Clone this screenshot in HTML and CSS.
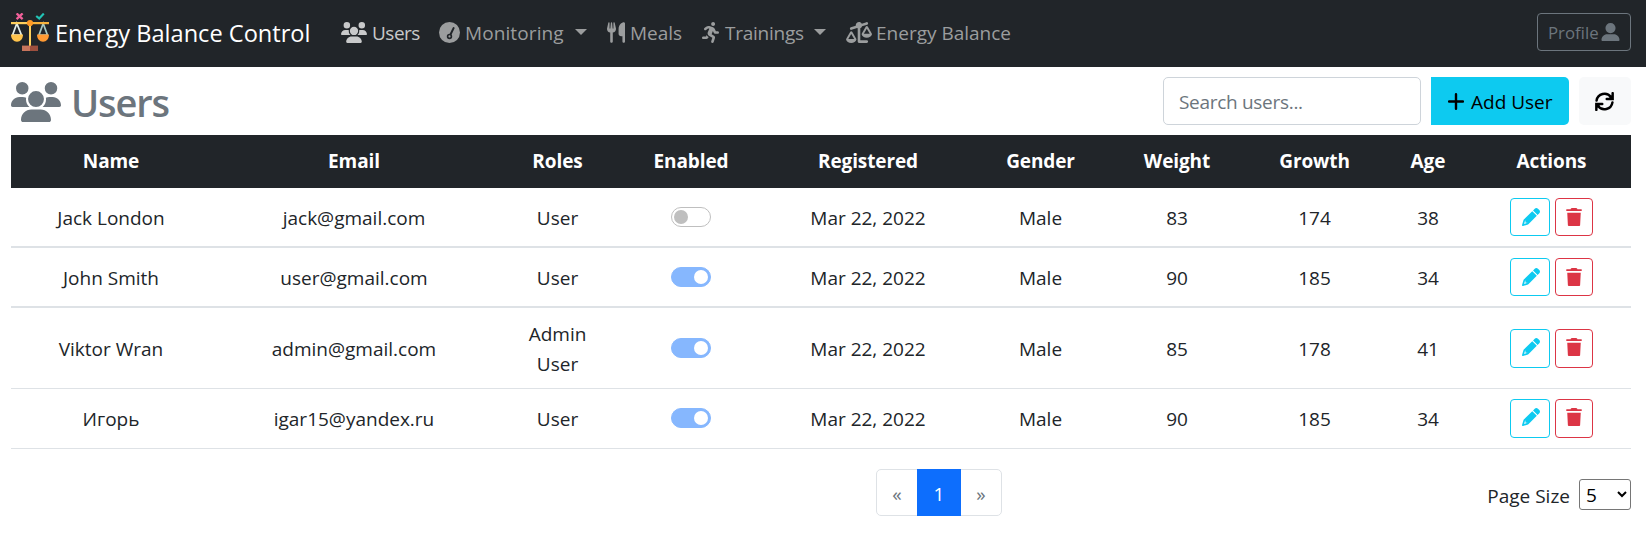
FILE: index.html
```html
<!DOCTYPE html>
<html lang="en">
<head>
<meta charset="utf-8">
<title>Energy Balance Control</title>
<link rel="stylesheet" href="styles.css">
</head>
<body>
<svg class="defs" width="0" height="0" aria-hidden="true">
  <symbol id="users" viewBox="0 0 640 512"><path d="M144 160A80 80 0 1 0 144 0a80 80 0 1 0 0 160zm368 0A80 80 0 1 0 512 0a80 80 0 1 0 0 160zM0 298.7C0 310.4 9.6 320 21.3 320H234.7c.2 0 .4 0 .7 0c-26.6-23.5-43.3-57.8-43.3-96c0-7.6 .7-15 1.9-22.3c-13.6-6.3-28.7-9.7-44.6-9.7H106.7C47.8 192 0 239.8 0 298.7zM320 320A102 102 0 1 0 320 116a102 102 0 1 0 0 204zM405.3 320H618.7c11.8 0 21.3-9.6 21.3-21.3C640 239.8 592.2 192 533.3 192H490.7c-15.9 0-31 3.5-44.6 9.7c1.3 7.2 1.9 14.7 1.9 22.3c0 38.2-16.8 72.5-43.3 96zM261.3 352C187.7 352 128 411.7 128 485.3c0 14.7 11.9 26.7 26.7 26.7H485.3c14.7 0 26.7-11.9 26.7-26.7C512 411.7 452.3 352 378.7 352H261.3z"/></symbol>
  <symbol id="gauge" viewBox="0 0 512 512"><circle cx="256" cy="256" r="256"/><path d="M256 352L356 150" class="gauge-needle"/><circle cx="256" cy="352" r="46" class="gauge-hub"/></symbol>
  <symbol id="utensils" viewBox="0 0 448 512"><path d="M416 0C400 0 288 32 288 176V288c0 35.3 28.7 64 64 64h32V480c0 17.7 14.3 32 32 32s32-14.3 32-32V352 240 32c0-17.7-14.3-32-32-32zM64 16C64 7.8 57.9 1 49.7 .1S34.2 4.6 32.4 12.5L2.1 148.8C.7 155.1 0 161.5 0 167.9c0 45.9 35.1 83.6 80 87.7V480c0 17.7 14.3 32 32 32s32-14.3 32-32V255.6c44.9-4.1 80-41.8 80-87.7c0-6.4-.7-12.8-2.1-19.1L191.6 12.5c-1.8-8-9.3-13.3-17.4-12.4S160 7.8 160 16V150.2c0 5.4-4.4 9.8-9.8 9.8c-5.1 0-9.3-3.9-9.8-9L127.9 14.6C127.2 6.3 120.3 0 112 0s-15.2 6.3-15.9 14.6L83.7 151c-.5 5.1-4.7 9-9.8 9c-5.4 0-9.8-4.4-9.8-9.8V16z"/></symbol>
  <symbol id="running" viewBox="0 0 416 512"><path d="M272 96c26.51 0 48-21.49 48-48S298.51 0 272 0s-48 21.49-48 48 21.49 48 48 48zM113.69 317.47l-14.8 34.52H32c-17.67 0-32 14.33-32 32s14.33 32 32 32h77.45c19.25 0 36.58-11.44 44.11-29.09l8.79-20.52-10.67-6.3c-17.32-10.23-30.06-25.37-37.99-42.61zM384 223.99h-44.03l-26.06-53.25c-12.5-25.55-35.45-44.23-61.78-50.94l-71.08-21.14c-28.3-6.8-57.77-.55-80.84 17.14l-39.67 30.41c-14.03 10.75-16.69 30.83-5.94 44.86s30.84 16.69 44.86 5.94l39.66-30.41c7.67-5.89 17.44-8 25.27-6.14l14.7 4.37-37.46 87.39c-12.62 29.48-1.31 64.01 26.3 80.31l84.98 50.17-27.47 87.73c-5.28 16.86 4.11 34.82 20.97 40.09 3.19 1 6.41 1.48 9.58 1.48 13.61 0 26.23-8.77 30.52-22.45l31.64-101.06c5.91-20.77-2.89-43.08-21.64-54.39l-61.24-36.14 31.31-78.28 20.27 41.43c8 16.34 24.92 26.89 43.11 26.89H384c17.67 0 32-14.33 32-32s-14.33-31.99-32-31.99z"/></symbol>
  <symbol id="scale" viewBox="0 0 640 512"><path d="M522.1 62.4c16.8-5.6 25.8-23.7 20.2-40.5S518.6-3.9 501.9 1.6l-113 37.7C375 15.8 349.3 0 320 0c-44.2 0-80 35.8-80 80c0 3 .2 5.9 .5 8.8L117.9 129.6c-16.8 5.6-25.8 23.7-20.2 40.5s23.7 25.8 40.5 20.2l135.5-45.2c4.5 3.2 9.3 5.9 14.4 8.2V480c0 17.7 14.3 32 32 32H512c17.7 0 32-14.3 32-32s-14.3-32-32-32H352V153.3c21-9.2 37.2-27 44.2-49l125.9-42zM439.6 288L512 163.8 584.4 288H439.6zM512 384c62.9 0 115.2-34 126-78.9c2.6-11-1-22.3-6.7-32.1L536.1 109.8c-5-8.6-14.2-13.8-24.1-13.8s-19.1 5.3-24.1 13.8L392.7 273.1c-5.7 9.8-9.3 21.1-6.7 32.1C396.8 350 449.1 384 512 384zM129.2 291.8L201.6 416H56.7l72.4-124.2zM3.2 433.1C14 478 66.3 512 129.2 512s115.2-34 126-78.9c2.6-11-1-22.3-6.7-32.1L153.2 237.8c-5-8.6-14.2-13.8-24.1-13.8s-19.1 5.3-24.1 13.8L9.9 401.1c-5.7 9.8-9.3 21.1-6.7 32.1z"/></symbol>
  <symbol id="user" viewBox="0 0 512 512"><path d="M256 288A144 144 0 1 0 256 0a144 144 0 1 0 0 288zm-94.7 32C72.2 320 0 392.2 0 481.3c0 17 13.8 30.7 30.7 30.7H481.3c17 0 30.7-13.8 30.7-30.7C512 392.2 439.8 320 350.7 320H161.3z"/></symbol>
  <symbol id="pencil" viewBox="0 0 512 512"><path d="M421.7 220.3L188.5 453.4L154.6 419.5L158.1 416H112C103.2 416 96 408.8 96 400V353.9L92.51 357.4C87.78 362.2 84.31 368 82.42 374.4L59.44 452.6L137.6 429.6C143.1 427.7 149.8 424.2 154.6 419.5L188.5 453.4C178.1 463.8 165.2 471.5 151.1 475.6L30.77 511C22.35 513.5 13.24 511.2 7.03 504.1C.8198 498.8-1.502 489.7 .976 481.2L36.37 360.9C40.53 346.8 48.16 333.9 58.57 323.5L291.7 90.34L421.7 220.3zM492.7 58.75C517.7 83.74 517.7 124.3 492.7 149.3L444.3 197.7L314.3 67.72L362.7 19.32C387.7-5.678 428.3-5.678 453.3 19.32L492.7 58.75z"/></symbol>
  <symbol id="trash" viewBox="0 0 448 512"><path d="M135.2 17.69C140.6 6.848 151.7 0 163.8 0H284.2C296.3 0 307.4 6.848 312.8 17.69L320 32H424C437 32 448 44 448 60C448 76 437 88 424 88H24C11 88 0 76 0 60C0 44 11 32 24 32H128L135.2 17.69zM398 488C397 502 388 512 374 512H74C60 512 51 502 50 488L32 136H416L398 488z"/></symbol>
  <symbol id="plus" viewBox="0 0 16 17"><path d="M8 1.2V15.8M1 8.5H15" class="plus-line"/></symbol>
  <symbol id="rotate" viewBox="0 0 512 512"><g class="rotate-line"><path d="M42 232A216 216 0 0 1 432 138"/><path d="M476 30V190H316"/><path d="M470 280A216 216 0 0 1 80 374"/><path d="M36 482V322H196"/></g><path d="M476 60V190H346zM36 452V322H166z"/></symbol>
</svg>

<nav class="navbar">
  <a class="brand">
    <svg class="brand-logo" viewBox="0 0 38 38">
      <path d="M5.6 .4L11.6 6.2M11.6 .4L5.6 6.2" fill="none" stroke="#f0609a" stroke-width="2.3"/>
      <path d="M25.2 3L28.2 5.4L32.8 .6" fill="none" stroke="#22c3b5" stroke-width="2.2"/>
      <path d="M5.8 10.5L1.6 22H10.4z" fill="none" stroke="#e3eeea" stroke-width="1.7"/>
      <path d="M32.2 10.5L28 22H36.4z" fill="none" stroke="#a5c9c4" stroke-width="1.7"/>
      <path d="M0 9h19v2.2H0z" fill="#ffcf5c"/><path d="M19 9h19v2.2H19z" fill="#f7b23c"/>
      <path d="M18 11h2v22h-2z" fill="#ffd15c"/>
      <circle cx="19" cy="10" r="3.1" fill="#ff9a26"/>
      <path d="M0 21.6H12C12 26 9.4 28.8 6 28.8S0 26 0 21.6z" fill="#ffc44d"/>
      <path d="M26 21.6H38C38 26 35.4 28.8 32 28.8S26 26 26 21.6z" fill="#ff9a33"/>
      <path d="M11 32.6h8V38h-8z" fill="#c8745c"/><path d="M19 32.6h8V38h-8z" fill="#9c4f3e"/>
    </svg>
    <span>Energy Balance Control</span>
  </a>
  <div class="nav-links">
    <a class="nav-link active"><svg class="i-wide"><use href="#users"/></svg><span>Users</span></a>
    <a class="nav-link dropdown monitoring"><svg class="i-round"><use href="#gauge"/></svg><span>Monitoring</span></a>
    <a class="nav-link meals"><svg class="i-meal"><use href="#utensils"/></svg><span>Meals</span></a>
    <a class="nav-link dropdown trainings"><svg class="i-run"><use href="#running"/></svg><span>Trainings</span></a>
    <a class="nav-link"><svg class="i-wide"><use href="#scale"/></svg><span>Energy Balance</span></a>
  </div>
  <button class="btn-profile"><span>Profile</span><svg><use href="#user"/></svg></button>
</nav>

<main class="content">
  <header class="toolbar">
    <h1><svg><use href="#users"/></svg><span>Users</span></h1>
    <div class="tools">
      <input class="search" type="text" placeholder="Search users...">
      <button class="btn-add"><svg><use href="#plus"/></svg><span>Add User</span></button>
      <button class="btn-refresh" aria-label="Refresh"><svg><use href="#rotate"/></svg></button>
    </div>
  </header>

  <table class="users">
    <colgroup><col class="c-name"><col class="c-email"><col class="c-roles"><col class="c-enabled"><col class="c-registered"><col class="c-gender"><col class="c-weight"><col class="c-growth"><col class="c-age"><col class="c-actions"></colgroup>
    <thead>
      <tr><th>Name</th><th>Email</th><th>Roles</th><th>Enabled</th><th>Registered</th><th>Gender</th><th>Weight</th><th>Growth</th><th>Age</th><th>Actions</th></tr>
    </thead>
    <tbody>
      <tr class="thick"><td>Jack London</td><td>jack@gmail.com</td><td>User</td><td class="ctl"><span class="switch"></span></td><td>Mar 22, 2022</td><td>Male</td><td>83</td><td>174</td><td>38</td><td class="ctl"><div class="actions"><button class="edit"><svg><use href="#pencil"/></svg></button><button class="delete"><svg><use href="#trash"/></svg></button></div></td></tr>
      <tr class="thick"><td>John Smith</td><td>user@gmail.com</td><td>User</td><td class="ctl"><span class="switch on"></span></td><td>Mar 22, 2022</td><td>Male</td><td>90</td><td>185</td><td>34</td><td class="ctl"><div class="actions"><button class="edit"><svg><use href="#pencil"/></svg></button><button class="delete"><svg><use href="#trash"/></svg></button></div></td></tr>
      <tr class="tall"><td>Viktor Wran</td><td>admin@gmail.com</td><td>Admin<br>User</td><td class="ctl"><span class="switch on"></span></td><td>Mar 22, 2022</td><td>Male</td><td>85</td><td>178</td><td>41</td><td class="ctl"><div class="actions"><button class="edit"><svg><use href="#pencil"/></svg></button><button class="delete"><svg><use href="#trash"/></svg></button></div></td></tr>
      <tr class="last"><td>Игорь</td><td>igar15@yandex.ru</td><td>User</td><td class="ctl"><span class="switch on"></span></td><td>Mar 22, 2022</td><td>Male</td><td>90</td><td>185</td><td>34</td><td class="ctl"><div class="actions"><button class="edit"><svg><use href="#pencil"/></svg></button><button class="delete"><svg><use href="#trash"/></svg></button></div></td></tr>
    </tbody>
  </table>

  <footer class="table-footer">
    <div class="pagination"><a>«</a><a class="current">1</a><a>»</a></div>
    <label class="page-size"><span>Page Size</span><select><option>5</option><option>10</option></select></label>
  </footer>
</main>
</body>
</html>
```
FILE: styles.css
```css
* { box-sizing: border-box; }

body {
  margin: 0;
  background: #fff;
  color: #212529;
  font-family: "Open Sans", "Noto Sans", sans-serif;
  font-size: 19px;
  line-height: 30px;
}

svg { display: block; fill: currentColor; flex: none; }
.defs { position: absolute; }
button, input, select { font: inherit; margin: 0; }

.gauge-needle { fill: none; stroke: #212529; stroke-width: 50; stroke-linecap: round; }
.gauge-hub { fill: #9b9d9e; stroke: #212529; stroke-width: 40; }
.plus-line { fill: none; stroke: #000; stroke-width: 2.4; stroke-linecap: round; }
.rotate-line { fill: none; stroke: #000; stroke-width: 66; stroke-linecap: round; }

/* Navbar */
.navbar {
  display: flex;
  align-items: center;
  height: 67px;
  padding: 0 15px 0 11px;
  background: #212529;
  color: #9b9d9e;
}
.brand { display: flex; align-items: center; width: 330px; color: #fff; font-size: 23.6px; }
.brand-logo { width: 38px; height: 38px; margin: 0 6px 3px 0; }
.brand span { padding-bottom: 2px; white-space: nowrap; }
.nav-links {
  display: grid;
  grid-template-columns: 98px 168px 95px 144px auto;
  align-items: center;
}
.nav-link { display: flex; align-items: center; white-space: nowrap; }
.nav-link svg { margin-right: 4px; margin-top: -2px; height: 21px; }
.nav-link span { padding-bottom: 1px; }
.nav-link.active { color: #c8c9ca; }
.nav-link.active svg { margin-right: 5px; }
.nav-link.active span { letter-spacing: -.5px; }
.monitoring svg, .meals svg { margin-right: 5px; }
.monitoring span { letter-spacing: .1px; }
.i-wide { width: 26px; }
.i-round { width: 21px; }
.i-meal { width: 18px; }
.i-run { width: 17px; }
.dropdown::after {
  content: "";
  margin: -3px 0 0 11px;
  border: 6px solid transparent;
  border-top-color: currentColor;
  border-bottom: 0;
}
.trainings span { letter-spacing: -.25px; }
.trainings svg { margin-right: 6px; }
.trainings::after { margin-left: 10px; }
.btn-profile {
  display: flex;
  align-items: center;
  justify-content: space-between;
  width: 94px;
  height: 38px;
  margin: 0 0 3px auto;
  padding: 0 10px;
  border: 1px solid #6c757d;
  border-radius: 4px;
  background: none;
  color: #6c757d;
  font-size: 16.8px;
}
.btn-profile span { padding-top: 1px; }
.btn-profile svg { width: 19px; height: 18px; }

/* Toolbar */
.content { padding: 10px 15px 0 11px; }
.toolbar { display: flex; align-items: flex-start; justify-content: space-between; height: 58px; }
h1 {
  display: flex;
  align-items: center;
  gap: 10px;
  height: 48px;
  margin: 0;
  color: #6c757d;
  font-size: 38px;
  font-weight: 600;
  letter-spacing: -1.1px;
}
h1 svg { width: 50px; height: 40px; margin-top: 2px; }
h1 span { padding-top: 2px; }
.tools { display: flex; gap: 10px; }
.search {
  width: 258px;
  height: 48px;
  padding: 1px 16px 0 15px;
  border: 1px solid #ced4da;
  border-radius: 5px;
  letter-spacing: -.3px;
}
.search::placeholder { color: #6c757d; opacity: 1; }
.btn-add {
  display: flex;
  align-items: center;
  gap: 7px;
  width: 138px;
  height: 48px;
  padding: 0 0 0 17px;
  border: 0;
  border-radius: 0 5px 5px 0;
  background: #0dcaf0;
  color: #000;
  white-space: nowrap;
}
.btn-add svg { width: 16px; height: 17px; }
.btn-add span { padding-top: 2px; }
.btn-refresh {
  display: flex;
  align-items: center;
  justify-content: center;
  width: 52px;
  height: 48px;
  padding: 0 1px 0 0;
  border: 0;
  border-radius: 5px;
  background: #f8f9fa;
  color: #000;
}
.btn-refresh svg { width: 19px; height: 19px; }

/* Users table */
.users {
  width: 1620px;
  table-layout: fixed;
  border-collapse: separate;
  border-spacing: 0;
  text-align: center;
}
.c-name { width: 200px; }
.c-email { width: 286px; }
.c-roles { width: 121px; }
.c-enabled { width: 146px; }
.c-registered { width: 208px; }
.c-gender { width: 137px; }
.c-weight { width: 136px; }
.c-growth { width: 139px; }
.c-age { width: 88px; }
.c-actions { width: 159px; }
.users th { height: 53px; padding: 0 0 1px; background: #212529; color: #fff; font-weight: 700; letter-spacing: -.1px; }
.users td { height: 60px; padding: 2px 0 0; border-bottom: 1px solid #dee2e6; vertical-align: middle; }
.users .thick td { border-bottom-width: 2px; }
.users .tall td { height: 81px; }
.users .last td { padding: 1px 0 0; }
.users td.ctl { padding: 0; }
.users .last td.ctl { padding: 0 0 1px; }
.switch {
  display: flex;
  align-items: center;
  width: 40px;
  height: 20px;
  margin: 0 auto;
  padding: 0 2px;
  border: 1px solid #bfbfbf;
  border-radius: 10px;
}
.switch::before { content: ""; width: 14px; height: 14px; border-radius: 50%; background: #bfbfbf; }
.switch.on { justify-content: flex-end; border-color: #86b7fe; background: #86b7fe; }
.switch.on::before { background: #fff; }
.actions { display: flex; justify-content: center; gap: 5px; }
.actions button {
  display: flex;
  align-items: center;
  justify-content: center;
  height: 38px;
  padding: 0 0 1px;
  border: 1px solid;
  border-radius: 4px;
  background: none;
}
.tall .actions button, .last .actions button { height: 39px; padding-bottom: 2px; }
.actions .edit { width: 40px; padding-left: 1px; color: #0dcaf0; }
.actions .delete { width: 38px; color: #dc3545; }
.edit svg { width: 18px; height: 18px; }
.delete svg { width: 16px; height: 18px; }

/* Footer */
.table-footer {
  display: flex;
  align-items: flex-start;
  justify-content: space-between;
  padding: 20px 0 0 865px;
}
.pagination { display: flex; width: 126px; height: 47px; border: 1px solid #dee2e6; border-radius: 5px; color: #6c757d; }
.pagination a { width: 40px; padding-top: 9px; text-align: center; }
.pagination .current { width: 44px; margin: -1px 0; padding-top: 10px; background: #0d6efd; color: #fff; }
.page-size { display: flex; align-items: center; gap: 9px; height: 31px; margin-top: 10px; }
.page-size span { padding-top: 2px; }
.page-size select {
  width: 52px;
  height: 31px;
  padding: 0 0 0 2px;
  border: 1px solid #767676;
  border-radius: 3px;
  background-color: #fff;
  color: #000;
}
```
